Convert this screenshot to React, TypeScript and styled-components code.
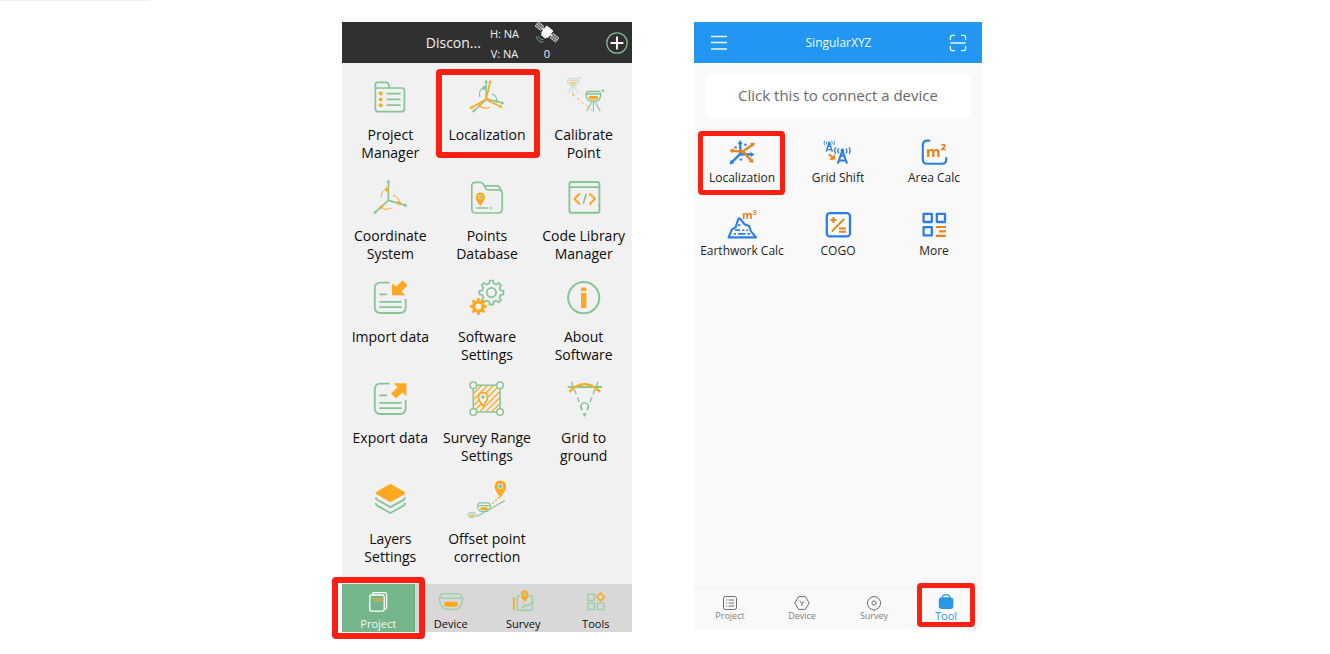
import React, { ReactNode } from 'react';
import styled, { createGlobalStyle } from 'styled-components';

const GREEN = '#86c695';
const ORANGE = '#fda91f';
const BLUE = '#2a7fe6';
const RUST = '#e8841c';

const GlobalStyle = createGlobalStyle`
  *, *::before, *::after { box-sizing: border-box; }
  body {
    margin: 0;
    background: #fff;
    font-family: 'Open Sans', 'Noto Sans', sans-serif;
  }
  button {
    margin: 0;
    padding: 0;
    border: 0;
    background: none;
    color: inherit;
    font: inherit;
    cursor: pointer;
  }
  h1, p { margin: 0; font-weight: 400; }
`;

/* ---------- layout ---------- */

const TopRule = styled.div`
  width: 150px;
  height: 1px;
  background: #edf0fa;
`;

const Stage = styled.main`
  display: flex;
  justify-content: center;
  align-items: flex-start;
  gap: 62px;
  padding: 21px 16px 16px 10px;
`;

const Phone = styled.section<{ $width: number; $bg: string }>`
  display: flex;
  flex-direction: column;
  flex: 0 1 ${(p) => p.$width}px;
  background: ${(p) => p.$bg};
`;

const Highlight = styled.span<{ $inset: string; $weight?: number }>`
  position: absolute;
  inset: ${(p) => p.$inset};
  border: ${(p) => p.$weight ?? 6}px solid #fe1f13;
  border-radius: 4px;
  pointer-events: none;
`;

/* ---------- field app (dark header) ---------- */

const DarkHeader = styled.header`
  display: flex;
  align-items: center;
  justify-content: flex-end;
  height: 41px;
  padding-right: 4px;
  background: #303030;
  color: #f0f0f0;
`;

const DeviceState = styled.span`
  font-size: 14px;
  line-height: 20px;
  margin-right: 9px;
`;

const StatusColumn = styled.div<{ $gap: number; $top: number }>`
  display: flex;
  flex-direction: column;
  align-items: center;
  justify-content: space-between;
  height: 41px;
  padding: ${(p) => p.$top}px 0 0;
  margin-right: ${(p) => p.$gap}px;
  font-size: 11px;
  line-height: 18px;
`;

const FieldGrid = styled.div`
  display: grid;
  grid-template-columns: repeat(3, 1fr);
  grid-auto-rows: minmax(101px, auto);
  padding: 15px 0 1px;
`;

const FieldTile = styled.button`
  position: relative;
  display: flex;
  flex-direction: column;
  align-items: center;
  gap: 8px;
  color: #0c0c0c;
  font-size: 14px;
  line-height: 18px;
  white-space: pre-line;
`;

const FieldTabs = styled.nav`
  display: grid;
  grid-template-columns: repeat(4, 1fr);
  background: #d8d8d8;
`;

const FieldTab = styled.button<{ $active?: boolean }>`
  position: relative;
  display: flex;
  flex-direction: column;
  align-items: center;
  gap: 2px;
  height: 48px;
  padding-top: 6px;
  background: ${(p) => (p.$active ? '#74b58b' : 'transparent')};
  color: ${(p) => (p.$active ? '#f4f8f5' : '#0c0c0c')};
  font-size: 11px;
  line-height: 16px;
`;

/* ---------- tool app (blue header) ---------- */

const BlueHeader = styled.header`
  display: flex;
  align-items: center;
  justify-content: space-between;
  height: 41px;
  padding: 0 15px 0 16px;
  background: #2196f3;
  color: #f6fafe;

  button { display: flex; }
`;

const AppTitle = styled.h1`
  font-size: 12px;
  line-height: 16px;
`;

const ConnectCard = styled.button`
  height: 44px;
  margin: 11px 11px 19px;
  padding-bottom: 2px;
  border-radius: 6px;
  background: #fff;
  color: #6a6a6a;
  font-size: 15px;
`;

const ToolGrid = styled.div`
  display: grid;
  grid-template-columns: repeat(3, 1fr);
  grid-auto-rows: 73px;
  flex: 1;
  min-height: 451px;
`;

const ToolTile = styled.button`
  position: relative;
  display: flex;
  flex-direction: column;
  align-items: center;
  gap: 1px;
  color: #1e1e1e;
  font-size: 12px;
  line-height: 16px;
  white-space: nowrap;
`;

const ToolTabs = styled.nav`
  display: grid;
  grid-template-columns: repeat(4, 1fr);
  border-top: 1px solid #efefef;
`;

const ToolTab = styled.button<{ $active?: boolean }>`
  position: relative;
  display: flex;
  flex-direction: column;
  align-items: center;
  height: 40px;
  padding-top: 5px;
  color: ${(p) => (p.$active ? '#2b97e6' : '#808080')};
  font-size: ${(p) => (p.$active ? 11 : 9)}px;
  line-height: 8px;
`;

/* ---------- drawing helpers ---------- */

const Drawing = styled.svg`
  display: block;
  flex: none;
  overflow: visible;
  fill: none;
  stroke-linejoin: round;
`;

const Icon = ({ size, children }: { size: number; children: ReactNode }) => (
  <Drawing width={size} height={size} viewBox={`0 0 ${size} ${size}`} aria-hidden="true">
    {children}
  </Drawing>
);

type ArrowProps = { from: [number, number]; to: [number, number]; color: string; width?: number; head?: number };

const Arrow = ({ from, to, color, width = 1.5, head = 3.6 }: ArrowProps) => {
  const a = Math.atan2(to[1] - from[1], to[0] - from[0]);
  const at = (turn: number) => `${to[0] - head * Math.cos(a + turn)},${to[1] - head * Math.sin(a + turn)}`;
  return (
    <g>
      <line
        x1={from[0]} y1={from[1]}
        x2={to[0] - head * 0.6 * Math.cos(a)} y2={to[1] - head * 0.6 * Math.sin(a)}
        stroke={color} strokeWidth={width}
      />
      <polygon points={`${to[0]},${to[1]} ${at(0.55)} ${at(-0.55)}`} fill={color} />
    </g>
  );
};

const gearPath = (cx: number, cy: number, outer: number, inner: number, teeth = 8) => {
  const points: string[] = [];
  const step = (Math.PI * 2) / teeth;
  for (let i = 0; i < teeth; i++) {
    const mid = i * step - Math.PI / 2;
    const corners: [number, number][] = [[-0.3, inner], [-0.18, outer], [0.18, outer], [0.3, inner]];
    corners.forEach(([k, r]) => {
      points.push(`${(cx + r * Math.cos(mid + k * step)).toFixed(2)} ${(cy + r * Math.sin(mid + k * step)).toFixed(2)}`);
    });
  }
  return `M${points.join('L')}Z`;
};

const Pin = ({ x, y, r, hole = GREEN }: { x: number; y: number; r: number; hole?: string }) => (
  <g>
    <path
      d={`M${x} ${y + r * 2}C${x - r * 0.4} ${y + r * 1.3} ${x - r} ${y + r * 0.8} ${x - r} ${y}A${r} ${r} 0 0 1 ${x + r} ${y}C${x + r} ${y + r * 0.8} ${x + r * 0.4} ${y + r * 1.3} ${x} ${y + r * 2}Z`}
      fill={ORANGE}
    />
    <circle cx={x} cy={y} r={r * 0.46} fill="#f1f1f1" />
    <circle cx={x} cy={y} r={r * 0.34} fill={hole} />
  </g>
);

const Receiver = ({ x, y, w }: { x: number; y: number; w: number }) => (
  <g transform={`translate(${x} ${y}) scale(${w / 14})`}>
    <path d="M.6 3.2L1.4 1.4Q1.8.5 2.8.5H11.2Q12.2.5 12.6 1.4L13.4 3.2V4.4Q13 6.4 11.6 8Q10.8 9 9.6 9H4.4Q3.2 9 2.4 8Q1 6.4.6 4.4ZM.6 3.2H13.4" stroke={GREEN} strokeWidth="1.1" />
    <rect x="3.4" y="4.8" width="7.2" height="2.8" rx=".8" fill={ORANGE} />
  </g>
);

const TripodReceiver = () => (
  <g>
    <path d="M.7 3L1.4 1.2Q1.8.5 2.6.5H13.4Q14.2.5 14.6 1.2L15.3 3V5Q14.6 7.4 13 9.2Q12.4 9.9 11.4 9.9H4.6Q3.6 9.9 3 9.2Q1.4 7.4.7 5ZM.7 3H15.3" stroke={GREEN} strokeWidth="1.3" />
    <rect x="3.4" y="5" width="9.2" height="3.6" rx="1.2" fill={ORANGE} />
    <path d="M16.6-1.2L18.4.6" stroke={GREEN} strokeWidth="2" />
    <path d="M8 10V20.6M6.8 10L1.2 20.2M9.2 10L14.8 20.2" stroke={GREEN} strokeWidth="1.1" />
  </g>
);

const DocLines = () => (
  <g stroke={GREEN} strokeWidth="1.8">
    <path d="M19.5 2.6H10.5Q4.8 2.6 4.8 8.3V27.3Q4.8 33 10.5 33H30Q35.7 33 35.7 27.3V19" />
    <path d="M10 14.3H16.4M10 21.8H31M10 27.2H31" strokeLinecap="round" />
  </g>
);

/* ---------- field app icons ---------- */

const fieldItems: { label: string; icon: ReactNode; marked?: boolean }[] = [
  {
    label: 'Project\nManager',
    icon: (
      <>
        <path d="M5.4 31V6.4Q5.4 4.4 7.4 4.4H16Q18 4.4 18.6 6.2L19.6 10H31.8Q34.4 10 34.4 12.6V31Q34.4 33.6 31.8 33.6H8Q5.4 33.6 5.4 31ZM5.4 10H19.6" stroke={GREEN} strokeWidth="1.7" />
        <path d="M16.6 15.6H30.6M16.6 21.4H30.6M16.6 27.2H30.6" stroke={GREEN} strokeWidth="1.8" />
        <g fill={ORANGE}>
          <circle cx="10.6" cy="15.6" r="2" /><circle cx="10.6" cy="21.4" r="2" /><circle cx="10.6" cy="27.2" r="2" />
        </g>
      </>
    ),
  },
  {
    label: 'Localization',
    marked: true,
    icon: (
      <>
        <Arrow from={[19, 21.6]} to={[19.3, 1.4]} color={GREEN} />
        <Arrow from={[19, 21.6]} to={[5.2, 34.4]} color={GREEN} />
        <Arrow from={[19, 20.8]} to={[37.4, 25.6]} color={GREEN} />
        <Arrow from={[19, 21.4]} to={[23.6, 2]} color={ORANGE} width={1.7} />
        <Arrow from={[19, 21.4]} to={[2.2, 30.8]} color={ORANGE} width={1.7} />
        <Arrow from={[19, 21.4]} to={[35.8, 29.8]} color={ORANGE} width={1.7} />
        <path d="M13 19.4Q10.6 12.4 17 9.4M24.6 16Q29.6 17 29.8 22.6" stroke={GREEN} strokeWidth="1.1" />
        <path d="M12.6 28Q17 31.6 23 29.2" stroke={ORANGE} strokeWidth="1.1" />
        <path d="M15.6 7.6L19.4 8.4L18 12L15.6 11.4ZM27.4 21.4L31.8 22.4L29.8 25Z" fill={GREEN} />
        <path d="M10.6 26.4L14.4 26.6L12.8 29.8Z" fill={ORANGE} />
      </>
    ),
  },
  {
    label: 'Calibrate\nPoint',
    icon: (
      <>
        <g opacity="0.5" transform="translate(3 0) scale(.75)"><TripodReceiver /></g>
        <g transform="translate(21.4 13)"><TripodReceiver /></g>
        <path d="M9 16.6L28 32.4" stroke={ORANGE} strokeWidth="1" strokeDasharray="3 2.4" opacity=".8" />
        <circle cx="9" cy="16.6" r="1" fill={ORANGE} opacity=".7" />
      </>
    ),
  },
  {
    label: 'Coordinate\nSystem',
    icon: (
      <>
        <Arrow from={[18.4, 21.4]} to={[18.4, 0.6]} color={GREEN} width={1.7} />
        <Arrow from={[18.4, 21.4]} to={[3.4, 35]} color={GREEN} width={1.7} />
        <Arrow from={[18.4, 21.4]} to={[37.6, 27]} color={GREEN} width={1.7} />
        <path d="M11.4 18.4Q11 12 16.6 10M23 16.4Q28.4 17 29.4 23M11.6 28.4Q16 32 21.6 29" stroke={ORANGE} strokeWidth="1" />
        <path d="M15.6 7.6L19 9.8L17.4 13L15.6 12ZM27.4 22L31.4 23.4L29.4 26L27 25ZM9.6 27L13 26.4L12 29.8L9.6 29.8Z" fill={ORANGE} />
      </>
    ),
  },
  {
    label: 'Points\nDatabase',
    icon: (
      <>
        <path d="M4.8 30V7.4Q4.8 3.4 8.4 3.4H13Q15 3.4 16.2 5L18.8 9.6Q19.4 10.8 21 10.8H31.4Q35.2 10.8 35.2 14.4V30Q35.2 34 31.4 34H8.6Q4.8 34 4.8 30Z" stroke={GREEN} strokeWidth="1.7" />
        <path d="M17 6.8H29.4Q33 6.8 33.6 11" stroke={GREEN} strokeWidth="1.7" />
        <Pin x={13.3} y={18} r={4.6} />
        <path d="M9 29H21.3M23 29H25.2" stroke={GREEN} strokeWidth="1.6" />
      </>
    ),
  },
  {
    label: 'Code Library\nManager',
    icon: (
      <>
        <rect x="5.4" y="3" width="30" height="30.8" rx="2" stroke={GREEN} strokeWidth="1.9" />
        <path d="M5.4 8.2H35.4M22.2 15L19.2 25" stroke={GREEN} strokeWidth="1.7" />
        <path d="M16 14.4L10.4 19.8L16 25.4M25.4 14.4L31 19.8L25.4 25.4" stroke={ORANGE} strokeWidth="2.1" />
      </>
    ),
  },
  {
    label: 'Import data',
    icon: (
      <>
        <DocLines />
        <path d="M22 3.4V15.2H35.4L31.4 11.6L37.6 5.2L32.4 .2L26.2 6.8Z" fill={ORANGE} />
      </>
    ),
  },
  {
    label: 'Software\nSettings',
    icon: (
      <>
        <path d={gearPath(24.4, 12.6, 12.2, 9.4)} stroke={GREEN} strokeWidth="1.7" />
        <circle cx="24.4" cy="12.6" r="4.7" stroke={GREEN} strokeWidth="1.8" />
        <path d={gearPath(11.4, 26.4, 8.6, 6.4)} fill={ORANGE} />
        <circle cx="11.4" cy="26.4" r="3" fill="#f1f1f1" />
      </>
    ),
  },
  {
    label: 'About\nSoftware',
    icon: (
      <>
        <circle cx="19.7" cy="17.7" r="15.6" stroke={GREEN} strokeWidth="2" />
        <path d="M17 7.4H22.4V11H17ZM17 12.8H22.4V28H17Z" fill={ORANGE} />
      </>
    ),
  },
  {
    label: 'Export data',
    icon: (
      <>
        <DocLines />
        <path d="M23.6 2.2H36.4V15.2L32.6 11.6L26 17.2L21 12.4L27.6 6.2Z" fill={ORANGE} />
      </>
    ),
  },
  {
    label: 'Survey Range\nSettings',
    icon: (
      <>
        <path d="M7 12L14 5M7 18L20 5M7 24L26 5M7 30L32 5M13 30.4L32.4 11M19 30.4L32.4 17M25 30.4L32.4 23M30 30.4L32.4 28" stroke={ORANGE} strokeWidth="1.3" />
        <rect x="6.3" y="4.3" width="26.7" height="26.7" stroke={GREEN} strokeWidth="1.6" />
        <g fill="#f6f6f6" stroke={GREEN} strokeWidth="1.5">
          <circle cx="6.3" cy="4.3" r="3.3" /><circle cx="33" cy="4.3" r="3.3" />
          <circle cx="6.3" cy="31" r="3.3" /><circle cx="33" cy="31" r="3.3" />
        </g>
        <path d="M16 25.4C14 21.6 11.4 20 11.4 16.2A4.6 4.6 0 0 1 20.6 16.2C20.6 20 18 21.6 16 25.4Z" fill="#f4f4f4" stroke={ORANGE} strokeWidth="1.8" />
        <circle cx="16" cy="16" r="1.8" fill={GREEN} />
      </>
    ),
  },
  {
    label: 'Grid to\nground',
    icon: (
      <>
        <path d="M3.6 6H38" stroke={GREEN} strokeWidth="1.8" />
        <path d="M7.4 .8L20.6 35M34 .8L20.6 35" stroke={GREEN} strokeWidth="1.4" strokeDasharray="5 3.4" />
        <path d="M18 29A4 4 0 1 1 23.2 29" stroke={GREEN} strokeWidth="1.3" />
        <path d="M18.8 32.4H22.4L20.6 36Z" fill={GREEN} />
        <path d="M5.4 10.8Q20.6-4.6 36 10.8" stroke={ORANGE} strokeWidth="2.4" />
      </>
    ),
  },
  {
    label: 'Layers\nSettings',
    icon: (
      <>
        <path d="M19 2.6Q20.4 1.8 21.8 2.6L34.6 10Q35.8 11 34.6 12L21.8 19.4Q20.4 20.2 19 19.4L6.2 12Q5 11 6.2 10Z" fill={ORANGE} />
        <path d="M5.8 15.2Q5.8 17 7.2 17.8L20.4 25.2L33.6 17.8Q35 17 35 15.2M5.8 21Q5.8 22.8 7.2 23.6L20.4 31L33.6 23.6Q35 22.8 35 21" stroke={GREEN} strokeWidth="1.9" />
      </>
    ),
  },
  {
    label: 'Offset point\ncorrection',
    icon: (
      <>
        <path d="M9.6 34.6L38 18.4" stroke={GREEN} strokeWidth="1.2" />
        <Receiver x={10} y={20.4} w={14} />
        <Receiver x={0.6} y={30.2} w={8.6} />
        <Pin x={33.4} y={4.2} r={5.8} />
        <path d="M32.4 15L24.4 22.6" stroke={ORANGE} strokeWidth="1.4" strokeDasharray="2 1.8" />
      </>
    ),
  },
];

const TAB_GREEN = '#9fd0aa';

const fieldTabs: { label: string; icon: ReactNode; active?: boolean }[] = [
  {
    label: 'Project',
    active: true,
    icon: (
      <>
        <path d="M6.4 4.8V4.4Q6.4 2.6 8.2 2.6H18.8Q20.6 2.6 20.6 4.4V17.2Q20.6 19 18.8 19H18.2" stroke="#fff" strokeWidth="1.3" />
        <rect x="3.8" y="5" width="14.4" height="16.2" rx="1.8" stroke="#fff" strokeWidth="1.3" />
        <path d="M4.6 8.6H17.4M8 10.8H17.4" stroke="#c4b04e" strokeWidth="1.4" />
      </>
    ),
  },
  {
    label: 'Device',
    icon: (
      <>
        <path d="M.4 8L1.8 5Q2.4 3.8 3.8 3.8H20.2Q21.6 3.8 22.2 5L23.6 8V9.6Q23 14.6 19.6 18Q18.4 19.2 16.8 19.2H7.2Q5.6 19.2 4.4 18Q1 14.6.4 9.6ZM.4 8.2H23.6" stroke={TAB_GREEN} strokeWidth="1.4" />
        <rect x="5.2" y="11.8" width="13.6" height="5" rx="1.8" fill={ORANGE} />
      </>
    ),
  },
  {
    label: 'Survey',
    icon: (
      <>
        <path d="M2.8 7.4V20" stroke={ORANGE} strokeWidth="1.8" />
        <path d="M9 5.8H7.8Q6.2 5.8 6.2 7.4V18.8Q6.2 20.4 7.8 20.4H19.8Q21.4 20.4 21.4 18.8V7.4Q21.4 5.8 19.8 5.8H18M11 18.4L14.4 14.6L16.6 16.2L21 12.6" stroke={TAB_GREEN} strokeWidth="1.6" />
        <Pin x={13.6} y={4.4} r={3.9} />
      </>
    ),
  },
  {
    label: 'Tools',
    icon: (
      <>
        <path d="M4 4H10.4V10.4H4ZM4 13H10.4V19.4H4ZM13.4 13H19.8V19.4H13.4Z" stroke={TAB_GREEN} strokeWidth="1.5" />
        <path d="M16.6 3.2L20.4 7L16.6 10.8L12.8 7Z" stroke={ORANGE} strokeWidth="1.7" />
      </>
    ),
  },
];

const SatelliteIcon = () => (
  <Drawing width="24" height="20" viewBox="0 0 24 20" aria-hidden="true">
    <g transform="rotate(38 12 9)">
      <path d="M-1 6.4H6V11.6H-1ZM18 6.4H25V11.6H18Z" fill="#59685d" stroke="#dcdcdc" strokeWidth=".8" />
      <path d="M1.4 6.4V11.6M3.8 6.4V11.6M20.4 6.4V11.6M22.8 6.4V11.6M-1 9H6M18 9H25" stroke="#d0d0d0" strokeWidth=".6" />
      <path d="M6 9H18" stroke="#fff" strokeWidth="1.6" />
      <rect x="7.6" y="4" width="8.8" height="9.6" rx="1" fill="#fff" />
      <path d="M9 14.4H15" stroke="#fff" strokeWidth="1.4" />
    </g>
    <path d="M1.4 13.4A6 6 0 0 0 8.4 19M3.6 13A4 4 0 0 0 8.4 16.6" stroke="#6fa07c" strokeWidth="1" />
  </Drawing>
);

/* ---------- tool app icons ---------- */

const Tower = () => (
  <g stroke={BLUE} strokeWidth="2">
    <path d="M6 2L1.4 15.4M6 2L10.6 15.4M3.8 7.6H8.2M2.6 12.4H9.4" />
    <circle cx="6" cy="2.2" r="1.8" fill={BLUE} stroke="none" />
    <path d="M2.6 .2A3.4 3.4 0 0 0 2.6 5M9.4 .2A3.4 3.4 0 0 1 9.4 5M-.6-.8A6 6 0 0 0 -.6 5.8M12.6-.8A6 6 0 0 1 12.6 5.8" strokeWidth="1.3" />
  </g>
);

const toolItems: { label: string; icon: ReactNode; marked?: boolean }[] = [
  {
    label: 'Localization',
    marked: true,
    icon: (
      <>
        <Arrow from={[14.6, 17]} to={[14, 3]} color={BLUE} width={2.3} head={4.8} />
        <Arrow from={[14.2, 17.4]} to={[28.6, 17.4]} color={BLUE} width={2.3} head={4.8} />
        <Arrow from={[14.6, 16.6]} to={[3.6, 27.4]} color={BLUE} width={2.3} head={4.8} />
        <Arrow from={[17.2, 14.8]} to={[3.2, 13.4]} color={RUST} width={2.3} head={4.8} />
        <Arrow from={[16, 15]} to={[29, 5.8]} color={RUST} width={2.3} head={4.8} />
        <Arrow from={[16.6, 14]} to={[27.4, 26]} color={RUST} width={2.3} head={4.8} />
        <g fill={BLUE}>
          <circle cx="9.6" cy="10.4" r="1.2" /><circle cx="19.4" cy="7.8" r="1.2" /><circle cx="15" cy="22.6" r="1.2" />
        </g>
      </>
    ),
  },
  {
    label: 'Grid Shift',
    icon: (
      <>
        <g transform="translate(3.2 4.2) scale(.68)"><Tower /></g>
        <g transform="translate(14.4 11.2)"><Tower /></g>
        <path d="M6.8 17.2L12 21.6M12.2 17.8V21.8H7.8" stroke={RUST} strokeWidth="1.8" />
      </>
    ),
  },
  {
    label: 'Area Calc',
    icon: (
      <>
        <path d="M11.4 3.6H9.4Q4.8 3.6 4.8 8.2V22.2Q4.8 26.8 9.4 26.8H24Q28.2 26.8 28.2 22.6V21" stroke={BLUE} strokeWidth="2.1" strokeLinecap="round" />
        <text x="8" y="20" fill={RUST} fontSize="15" fontWeight="700">m²</text>
      </>
    ),
  },
  {
    label: 'Earthwork Calc',
    icon: (
      <>
        <path d="M2.6 27.4L6 19.4L9.6 17.4L12.2 9.2Q13 7.4 14.6 9.2L18.4 14.2L23 16L25 21.4L30 27.4Z" stroke={BLUE} strokeWidth="2.1" />
        <path d="M12 15.2H14.4M9 20.2H14M16.4 20.2H18.4M20.4 20.2H22M8 23.8H10M12 23.8H19.4M21.4 23.8H24" stroke={BLUE} strokeWidth="1.7" />
        <text x="16" y="9" fill={RUST} fontSize="11" fontWeight="700">m³</text>
      </>
    ),
  },
  {
    label: 'COGO',
    icon: (
      <>
        <rect x="4.8" y="3.2" width="23.2" height="23.2" rx="3" stroke={BLUE} strokeWidth="2.3" />
        <path d="M11.4 7V13M8.4 10H14.4M22.2 9L9.8 21.4M17 18.6H24M17 21.8H24" stroke={RUST} strokeWidth="2" />
      </>
    ),
  },
  {
    label: 'More',
    icon: (
      <>
        <path d="M5.6 3.8H13.8V12H5.6ZM18.8 3.8H27V12H18.8ZM5.6 17.2H13.8V25.4H5.6Z" stroke={BLUE} strokeWidth="2.3" />
        <path d="M17.8 17H28M21 21.4H28M17.8 25.8H28" stroke={RUST} strokeWidth="2.2" />
      </>
    ),
  },
];

const LINE = '#6c6c6c';

const toolTabs: { label: string; icon: ReactNode; active?: boolean }[] = [
  {
    label: 'Project',
    icon: (
      <g stroke={LINE}>
        <rect x="2.5" y="2.5" width="13" height="13" rx="2" />
        <path d="M5 6H6.2M5 9H6.2M5 12H6.2M7.6 6H13.2M7.6 9H13.2M7.6 12H13.2" />
      </g>
    ),
  },
  {
    label: 'Device',
    icon: (
      <g stroke={LINE}>
        <path d="M5.6 2.6H12.4L16.2 9L12.4 15.4H5.6L1.8 9Z" />
        <path d="M6.6 7.2L9 9.2L11.4 7.2M9 9.2V12" />
      </g>
    ),
  },
  {
    label: 'Survey',
    icon: (
      <g stroke={LINE}>
        <path d="M6.4 15.2A6.6 6.6 0 1 1 11.6 15.2L9 16.4Z" />
        <circle cx="9" cy="9" r="2.1" />
      </g>
    ),
  },
  {
    label: 'Tool',
    active: true,
    icon: (
      <>
        <rect x="1.8" y="3.2" width="14.6" height="11.8" rx="3" fill="#2b97e6" />
        <path d="M5.4 3.8Q5.4 .8 8 .8H10.2Q12.8 .8 12.8 3.8" stroke="#2b97e6" strokeWidth="1.2" />
      </>
    ),
  },
];

/* ---------- screens ---------- */

const FieldApp = () => (
  <Phone $width={290} $bg="#f1f1f1" aria-label="Project screen">
    <DarkHeader>
      <DeviceState>Discon...</DeviceState>
      <StatusColumn $gap={16} $top={3}>
        <span>H: NA</span>
        <span>V: NA</span>
      </StatusColumn>
      <StatusColumn $gap={47} $top={1}>
        <SatelliteIcon />
        <span>0</span>
      </StatusColumn>
      <button type="button" aria-label="Add">
        <Icon size={22}>
          <circle cx="11" cy="11" r="10.2" stroke="#7fb98c" strokeWidth="1.3" />
          <path d="M11 4.6V17.4M4.6 11H17.4" stroke="#fff" strokeWidth="1.9" />
        </Icon>
      </button>
    </DarkHeader>
    <FieldGrid>
      {fieldItems.map((item) => (
        <FieldTile key={item.label} type="button">
          <Icon size={40}>{item.icon}</Icon>
          <span>{item.label}</span>
          {item.marked && <Highlight $inset="-9px -5px 21px -3px" />}
        </FieldTile>
      ))}
    </FieldGrid>
    <FieldTabs>
      {fieldTabs.map((tab) => (
        <FieldTab key={tab.label} type="button" $active={tab.active}>
          <Icon size={24}>{tab.icon}</Icon>
          <span>{tab.label}</span>
          {tab.active && <Highlight $inset="-7px -10px" />}
        </FieldTab>
      ))}
    </FieldTabs>
  </Phone>
);

const ToolApp = () => (
  <Phone $width={288} $bg="#f9f9f9" aria-label="Tool screen">
    <BlueHeader>
      <button type="button" aria-label="Menu">
        <Icon size={18}>
          <path d="M1 2.5H17M1 8.5H17M1 15H17" stroke="#eef6fe" strokeWidth="1.4" />
        </Icon>
      </button>
      <AppTitle>SingularXYZ</AppTitle>
      <button type="button" aria-label="Scan">
        <Icon size={18}>
          <path d="M1.4 6V3.4Q1.4 1.4 3.4 1.4H6M12 1.4H14.6Q16.6 1.4 16.6 3.4V6M1.4 12V14.6Q1.4 16.6 3.4 16.6H6M12 16.6H14.6Q16.6 16.6 16.6 14.6V12M1.4 9H16.6" stroke="#eef6fe" strokeWidth="1.3" />
        </Icon>
      </button>
    </BlueHeader>
    <ConnectCard type="button">Click this to connect a device</ConnectCard>
    <ToolGrid>
      {toolItems.map((item) => (
        <ToolTile key={item.label} type="button">
          <Icon size={32}>{item.icon}</Icon>
          <span>{item.label}</span>
          {item.marked && <Highlight $inset="-6px 5px 15px 4px" $weight={5} />}
        </ToolTile>
      ))}
    </ToolGrid>
    <ToolTabs>
      {toolTabs.map((tab) => (
        <ToolTab key={tab.label} type="button" $active={tab.active}>
          <Icon size={18}>{tab.icon}</Icon>
          <span>{tab.label}</span>
          {tab.active && <Highlight $inset="-6px 7px 2px" $weight={5} />}
        </ToolTab>
      ))}
    </ToolTabs>
  </Phone>
);

export default function App() {
  return (
    <>
      <GlobalStyle />
      <TopRule />
      <Stage>
        <FieldApp />
        <ToolApp />
      </Stage>
    </>
  );
}
